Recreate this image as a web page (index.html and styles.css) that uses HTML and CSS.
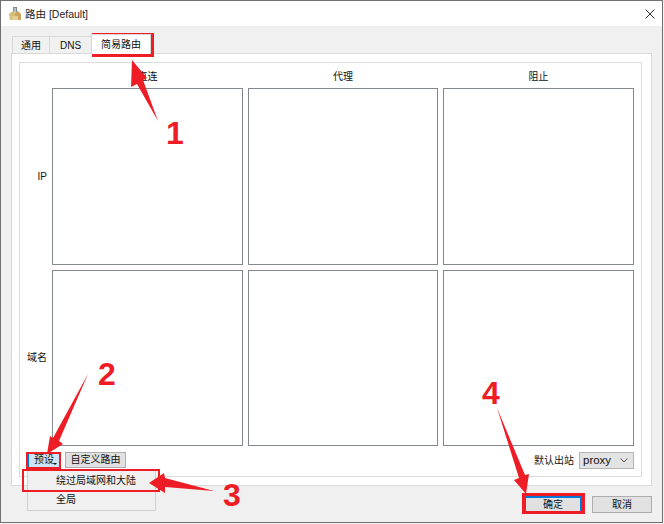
FILE: index.html
```html
<!DOCTYPE html>
<html lang="en">
<head>
    <meta charset="UTF-8">
    <meta name="viewport" content="width=device-width, initial-scale=1.0">
    <link rel="stylesheet" href="styles.css">
</head>

<body>
    <div class="window">
        <div class="titlebar">
            <svg class="app-icon" width="12" height="14" viewBox="0 0 12 14">
                <rect x="4" y="0" width="4" height="5" fill="#7d8790"/>
                <path d="M5 1h2v4H5z" fill="#b9c2ca"/>
                <path d="M0 7l4-3 3 2v7H1z" fill="#d8bc78"/>
                <path d="M6 6l3-2 3 3v6H6z" fill="#c9a45c"/>
                <path d="M3 9h6v4H3z" fill="#e3cc92"/>
            </svg>
            <span class="title">路由 [Default]</span>
            <svg class="close-icon" width="10" height="10" viewBox="0 0 10 10">
                <path d="M0.5 0.5l9 9M9.5 0.5l-9 9" stroke="#333" stroke-width="1" fill="none"/>
            </svg>
        </div>

        <div class="content">
            <ul class="tabs">
                <li class="tab-general">通用</li>
                <li class="tab-dns">DNS</li>
                <li class="active">简易路由</li>
            </ul>

            <div class="tab-panel">
                <div class="group">
                    <div class="grid">
                        <div></div>
                        <div class="col-title">直连</div>
                        <div class="col-title">代理</div>
                        <div class="col-title">阻止</div>

                        <div class="row-title">IP</div>
                        <div class="cell"></div>
                        <div class="cell"></div>
                        <div class="cell"></div>

                        <div class="row-title">域名</div>
                        <div class="cell"></div>
                        <div class="cell"></div>
                        <div class="cell"></div>
                    </div>

                    <div class="toolbar">
                        <button class="btn preset">预设<i class="caret"></i></button>
                        <button class="btn custom">自定义路由</button>
                        <span class="outbound-label">默认出站</span>
                        <div class="select">proxy
                            <svg width="8" height="5" viewBox="0 0 8 5">
                                <path d="M0.5 0.5l3.5 3.5 3.5-3.5" stroke="#555" fill="none"/>
                            </svg>
                        </div>
                    </div>
                </div>
            </div>

            <div class="footer">
                <button class="btn ok">确定</button>
                <button class="btn cancel">取消</button>
            </div>
        </div>
    </div>

    <ul class="menu">
        <li>绕过局域网和大陆</li>
        <li>全局</li>
    </ul>

    <!-- red notes drawn on top of the screenshot -->
    <div class="mark mark-tab"></div>
    <div class="mark mark-preset"></div>
    <div class="mark mark-menu"></div>
    <div class="mark mark-ok"></div>

    <svg class="arrows" width="664" height="524" viewBox="0 0 664 524">
        <polygon fill="#ee1c25" points="132,60 147,78 143,80 158,121 137,84 131,87"/>
        <polygon fill="#ee1c25" points="47,454 50,436 53,438 88,374 59,441 63,444"/>
        <polygon fill="#ee1c25" points="149,483 164,473 165,478 214,491 165,487 165,493"/>
        <polygon fill="#ee1c25" points="526,494 514,480 519,478 497,408 525,475 529,474"/>
    </svg>

    <span class="num num1">1</span>
    <span class="num num2">2</span>
    <span class="num num3">3</span>
    <span class="num num4">4</span>
</body>

</html>
```

FILE: styles.css
```css
body {
    font-family: "Liberation Sans", "Noto Sans CJK SC", sans-serif;
    font-size: 10px;
    color: #111;
    margin: 0;
    padding: 0;
    width: 664px;
    height: 524px;
    position: relative;
    overflow: hidden;
    background-color: #f4f4f4;
}

.window {
    width: 663px;
    height: 523px;
    box-sizing: border-box;
    border: 1px solid #707070;
    display: flex;
    flex-direction: column;
    background-color: #f0f0f0;
}

.titlebar {
    height: 25px;
    flex: none;
    background-color: white;
    display: flex;
    align-items: center;
    padding: 0 6px 0 8px;
}

.app-icon {
    margin-right: 4px;
}

.title {
    font-size: 10.5px;
    color: #222;
    flex: 1;
}

.close-icon {
    margin-right: 1px;
}

.content {
    flex: 1;
    display: flex;
    flex-direction: column;
    padding: 9px 10px 9px 10px;
}

.tabs {
    list-style-type: none;
    margin: 0;
    padding: 0 0 0 1px;
    display: flex;
    height: 18px;
    flex: none;
    position: relative;
}

.tabs li {
    box-sizing: border-box;
    height: 17px;
    margin-top: 1px;
    padding-top: 2px;
    border: 1px solid #d9d9d9;
    border-bottom: none;
    border-right: none;
    background-color: #f0f0f0;
    font-size: 10px;
    line-height: 13px;
    text-align: center;
}

.tabs .tab-general {
    width: 37px;
}

.tabs .tab-dns {
    width: 42px;
}

.tabs li.active {
    width: 60px;
    background-color: white;
    height: 20px;
    margin-top: -1px;
    padding-top: 3px;
    border-right: 1px solid #d9d9d9;
    position: relative;
    z-index: 1;
}

.tab-panel {
    height: 433px;
    flex: none;
    box-sizing: border-box;
    background-color: white;
    border: 1px solid #d9d9d9;
    padding: 8px 9px 8px 7px;
}

.group {
    height: 100%;
    box-sizing: border-box;
    border: 1px solid #dcdcdc;
    padding: 0 7px 0 0;
    display: flex;
    flex-direction: column;
}

.grid {
    display: grid;
    grid-template-columns: 27px 191px 190px 191px;
    grid-template-rows: 20px 177px 176px;
    column-gap: 5px;
    row-gap: 5px;
}

.grid > .col-title {
    text-align: center;
    line-height: 28px;
    height: 20px;
}

.grid .row-title {
    text-align: right;
    align-self: center;
    line-height: 14px;
}

.cell {
    box-sizing: border-box;
    border: 1px solid #828790;
    background-color: white;
}

.toolbar {
    display: flex;
    align-items: flex-start;
    margin-top: 6px;
    padding-left: 8px;
}

.btn {
    font-family: inherit;
    font-size: 10px;
    color: #111;
    padding: 0;
    margin: 0;
    box-sizing: border-box;
    background-color: #e1e1e1;
    border: 1px solid #adadad;
    line-height: 14px;
}

.preset {
    width: 32px;
    height: 16px;
    background-color: #cce4f7;
    border-color: #0078d7;
    position: relative;
}

.caret {
    position: absolute;
    right: 2px;
    bottom: 2px;
    border-left: 2px solid transparent;
    border-right: 2px solid transparent;
    border-top: 2px solid #111;
}

.custom {
    width: 61px;
    height: 16px;
    margin-left: 5px;
}

.outbound-label {
    margin-left: auto;
    margin-right: 5px;
    line-height: 18px;
}

.select {
    box-sizing: border-box;
    width: 55px;
    height: 17px;
    background-color: #e3e3e3;
    border: 1px solid #b4b4b4;
    font-size: 11.5px;
    line-height: 15px;
    padding: 0 5px 0 3px;
    display: flex;
    align-items: center;
    justify-content: space-between;
}

.footer {
    flex: 1;
    display: flex;
    justify-content: flex-end;
    align-items: flex-end;
    gap: 10px;
}

.ok,
.cancel {
    width: 60px;
    height: 17px;
}

.ok {
    width: 58px;
    background-color: #e1e1e1;
    border: 2px solid #0078d7;
}

/* popup of the preset button */
.menu {
    list-style-type: none;
    margin: 0;
    padding: 0;
    position: absolute;
    left: 27px;
    top: 470px;
    width: 129px;
    height: 41px;
    box-sizing: border-box;
    background-color: #f0f0f0;
    border: 1px solid #cfcfcf;
}

.menu li {
    height: 19px;
    line-height: 20px;
    padding-left: 28px;
}

.mark {
    position: absolute;
    box-sizing: border-box;
    border: 3px solid #ee1c25;
}

.mark-tab {
    left: 92px;
    top: 33px;
    width: 62px;
    height: 24px;
}

.mark-preset {
    left: 26px;
    top: 452px;
    width: 35px;
    height: 17px;
    border-width: 2px;
}

.mark-menu {
    left: 22px;
    top: 469px;
    width: 138px;
    height: 23px;
    border-width: 2px;
}

.mark-ok {
    left: 522px;
    top: 493px;
    width: 63px;
    height: 21px;
    border-width: 3px;
}

.arrows {
    position: absolute;
    left: 0;
    top: 0;
}

.num {
    position: absolute;
    font-size: 32px;
    font-weight: bold;
    line-height: 32px;
    color: #ee1c25;
}

.num1 { left: 166px; top: 117px; }
.num2 { left: 98px; top: 358px; }
.num3 { left: 223px; top: 479px; }
.num4 { left: 482px; top: 377px; }
```
